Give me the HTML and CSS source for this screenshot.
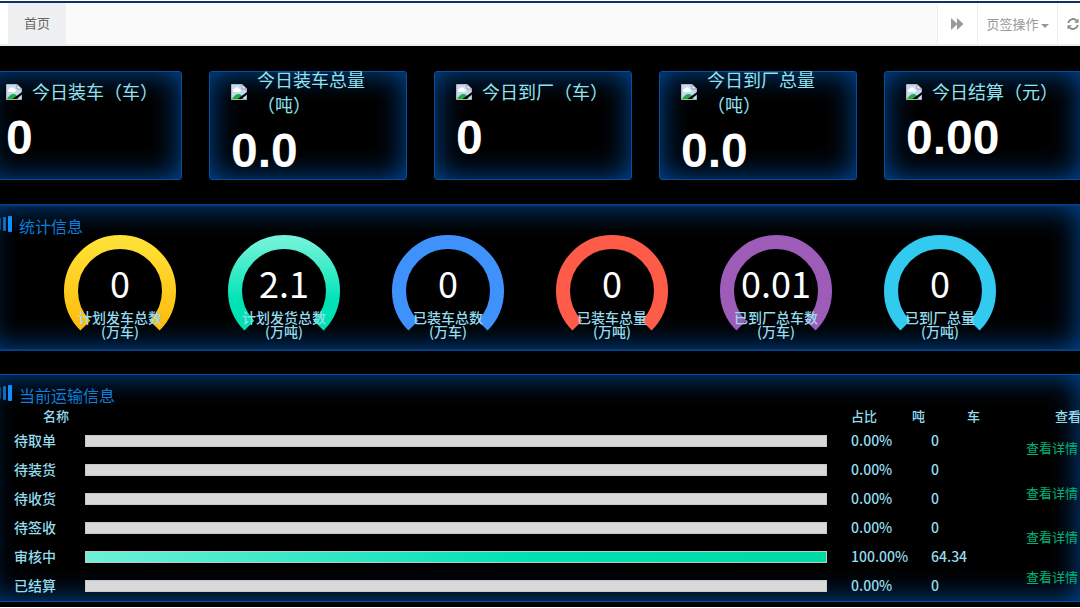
FILE: index.html
```html
<!DOCTYPE html>
<html lang="zh-CN">
<head>
    <meta charset="UTF-8">
    <meta name="viewport" content="width=device-width, initial-scale=1.0">
    <title>首页</title>
    <link rel="stylesheet" href="styles.css">
</head>
<body>
    <!-- Shared shapes -->
    <svg class="defs" width="0" height="0" aria-hidden="true">
        <defs>
            <linearGradient id="yellow" x1="0" y1="0" x2="0" y2="1">
                <stop offset="0" stop-color="#ffe135"/>
                <stop offset="1" stop-color="#ffbc0e"/>
            </linearGradient>
            <linearGradient id="teal" x1="0" y1="0" x2="0" y2="1">
                <stop offset="0" stop-color="#6ff3d8"/>
                <stop offset="0.7" stop-color="#00e4b6"/>
                <stop offset="1" stop-color="#00e0b0"/>
            </linearGradient>
            <symbol id="picture" viewBox="0 0 16 16">
                <path d="M0.500 0.500h10.500l4.500 4.500v10.500h-15z" fill="#c3d9f5" stroke="#b5b5b5"/>
                <path d="M2 6.500a2 2 0 0 1 2-2 2.500 2.500 0 0 1 4.500 0.500 1.500 1.500 0 0 1 0 3h-5a1.500 1.500 0 0 1-1.500-1.500z" fill="#fff"/>
                <path d="M1 15c1.500-3 4-5 6.500-5 2 0 4 1.500 5 5z" fill="#1fae3c"/>
                <path d="M11 0.500v4.500h4.500z" fill="#fff" stroke="#999"/>
                <path d="M16 8v2.500l-5.500 4.500h-4z" fill="#000"/>
            </symbol>
            <symbol id="bars" viewBox="0 0 16 20">
                <rect x="1" y="2" width="3" height="12" rx="1" fill="#0a4a86"/>
                <rect x="6" y="1" width="3" height="14" rx="1" fill="#0b6cc0"/>
                <rect x="11" y="0" width="4" height="16" rx="1" fill="#1090ff"/>
            </symbol>
        </defs>
    </svg>

    <nav class="tabs">
        <a class="tab" href="#">首页</a>
        <button class="tab-btn tab-next" aria-label="下一页">
            <svg width="13" height="12" viewBox="0 0 13 12"><path d="M0 0l6 5.500v-5.500l6.500 6-6.500 6v-5.500l-6 5.500z" fill="#999"/></svg>
        </button>
        <button class="tab-btn tab-menu">页签操作<span class="caret"></span></button>
        <button class="tab-btn tab-refresh" aria-label="刷新">
            <svg width="12" height="12" viewBox="0 0 12 12">
                <path d="M1.200 5a5 5 0 0 1 8.300-2.600M10.800 7a5 5 0 0 1-8.300 2.600" fill="none" stroke="#888" stroke-width="1.800"/>
                <path d="M11.500 0.500v4.300h-4.300zM0.500 11.500v-4.300h4.300z" fill="#888"/>
            </svg>
        </button>
    </nav>

    <main class="dashboard">
        <section class="cards">
            <div class="card">
                <div class="card-head"><svg class="card-icon"><use href="#picture"/></svg><span>今日装车（车）</span></div>
                <div class="card-value">0</div>
            </div>
            <div class="card">
                <div class="card-head"><svg class="card-icon"><use href="#picture"/></svg><span>今日装车总量（吨）</span></div>
                <div class="card-value">0.0</div>
            </div>
            <div class="card">
                <div class="card-head"><svg class="card-icon"><use href="#picture"/></svg><span>今日到厂（车）</span></div>
                <div class="card-value">0</div>
            </div>
            <div class="card">
                <div class="card-head"><svg class="card-icon"><use href="#picture"/></svg><span>今日到厂总量（吨）</span></div>
                <div class="card-value">0.0</div>
            </div>
            <div class="card">
                <div class="card-head"><svg class="card-icon"><use href="#picture"/></svg><span>今日结算（元）</span></div>
                <div class="card-value">0.00</div>
            </div>
        </section>

        <section class="panel stats">
            <h2 class="panel-title"><svg class="bars-icon"><use href="#bars"/></svg>统计信息</h2>
            <div class="gauges">
                <svg class="gauge" viewBox="0 0 112 108">
                    <path class="ring" stroke="url(#yellow)" d="M21.350 90.650A49 49 0 1 1 90.650 90.650"/>
                    <text class="gauge-value" x="56" y="63">0</text>
                    <text class="gauge-label" x="56" y="88">计划发车总数</text>
                    <text class="gauge-label" x="56" y="102">(万车)</text>
                </svg>
                <svg class="gauge" viewBox="0 0 112 108">
                    <path class="ring" stroke="url(#teal)" d="M21.350 90.650A49 49 0 1 1 90.650 90.650"/>
                    <text class="gauge-value" x="56" y="63">2.1</text>
                    <text class="gauge-label" x="56" y="88">计划发货总数</text>
                    <text class="gauge-label" x="56" y="102">(万吨)</text>
                </svg>
                <svg class="gauge" viewBox="0 0 112 108">
                    <path class="ring" stroke="#3f92fc" d="M21.350 90.650A49 49 0 1 1 90.650 90.650"/>
                    <text class="gauge-value" x="56" y="63">0</text>
                    <text class="gauge-label" x="56" y="88">已装车总数</text>
                    <text class="gauge-label" x="56" y="102">(万车)</text>
                </svg>
                <svg class="gauge" viewBox="0 0 112 108">
                    <path class="ring" stroke="#ff5b49" d="M21.350 90.650A49 49 0 1 1 90.650 90.650"/>
                    <text class="gauge-value" x="56" y="63">0</text>
                    <text class="gauge-label" x="56" y="88">已装车总量</text>
                    <text class="gauge-label" x="56" y="102">(万吨)</text>
                </svg>
                <svg class="gauge" viewBox="0 0 112 108">
                    <path class="ring" stroke="#9d5cb8" d="M21.350 90.650A49 49 0 1 1 90.650 90.650"/>
                    <text class="gauge-value" x="56" y="63">0.01</text>
                    <text class="gauge-label" x="56" y="88">已到厂总车数</text>
                    <text class="gauge-label" x="56" y="102">(万车)</text>
                </svg>
                <svg class="gauge" viewBox="0 0 112 108">
                    <path class="ring" stroke="#32caee" d="M21.350 90.650A49 49 0 1 1 90.650 90.650"/>
                    <text class="gauge-value" x="56" y="63">0</text>
                    <text class="gauge-label" x="56" y="88">已到厂总量</text>
                    <text class="gauge-label" x="56" y="102">(万吨)</text>
                </svg>
            </div>
        </section>

        <section class="panel transport">
            <h2 class="panel-title"><svg class="bars-icon"><use href="#bars"/></svg>当前运输信息</h2>
            <table class="transport-table">
                <colgroup>
                    <col class="col-name">
                    <col>
                    <col class="col-rate">
                    <col class="col-ton">
                    <col class="col-car">
                    <col class="col-view">
                </colgroup>
                <thead>
                    <tr><th class="indent">名称</th><th></th><th>占比</th><th>吨</th><th>车</th><th class="indent">查看</th></tr>
                </thead>
                <tbody>
                    <tr>
                        <td>待取单</td>
                        <td><div class="bar"></div></td>
                        <td>0.00%</td><td class="ton">0</td><td></td>
                        <td rowspan="6" class="links-cell">
                            <div class="links">
                                <a href="#">查看详情</a>
                                <a href="#">查看详情</a>
                                <a href="#">查看详情</a>
                                <a href="#">查看详情</a>
                            </div>
                        </td>
                    </tr>
                    <tr><td>待装货</td><td><div class="bar"></div></td><td>0.00%</td><td class="ton">0</td><td></td></tr>
                    <tr><td>待收货</td><td><div class="bar"></div></td><td>0.00%</td><td class="ton">0</td><td></td></tr>
                    <tr><td>待签收</td><td><div class="bar"></div></td><td>0.00%</td><td class="ton">0</td><td></td></tr>
                    <tr><td>审核中</td><td><div class="bar"><div class="bar-fill" style="width: 100%"></div></div></td><td>100.00%</td><td class="ton">64.34</td><td></td></tr>
                    <tr><td>已结算</td><td><div class="bar"></div></td><td>0.00%</td><td class="ton">0</td><td></td></tr>
                </tbody>
            </table>
        </section>
    </main>
</body>
</html>
```
FILE: styles.css
```css
* {
    box-sizing: border-box;
    margin: 0;
    padding: 0;
}

body {
    background-color: #fff;
    font-family: "Noto Sans CJK SC", sans-serif;
    font-size: 14px;
    overflow: hidden;
}

.defs {
    position: absolute;
}

/* Tab bar */
.tabs {
    display: flex;
    height: 45px;
    margin-top: 1px;
    padding-left: 8px;
    border-top: 2px solid #14305f;
    border-bottom: 2px solid #e9eef0;
    background: linear-gradient(to right, #fff 8px, #fafafa 8px);
}

.tab,
.tab-btn {
    font-family: inherit;
    font-size: 13px;
    line-height: 40px;
}

.tab {
    width: 58px;
    margin-right: auto;
    background-color: #eff0f1;
    color: #666;
    text-align: center;
    text-decoration: none;
}

.tab-btn {
    display: flex;
    align-items: center;
    justify-content: center;
    border: none;
    border-left: 1px solid #eee;
    background-color: #fff;
    color: #999;
    cursor: pointer;
}

.tab-next {
    width: 40px;
}

.tab-menu {
    width: 80px;
}

.tab-refresh {
    width: 30px;
    margin-right: -7px;
}

.caret {
    margin: 4px 0 0 2px;
    border-top: 4px solid #999;
    border-left: 4px solid transparent;
    border-right: 4px solid transparent;
}

/* Dashboard runs past both window edges */
.dashboard {
    overflow: hidden;
    padding: 25px 0 5px;
    background-color: #000;
}

.cards,
.panel {
    margin-left: -16px;
    margin-right: -2px;
}

.cards {
    display: grid;
    grid-template-columns: repeat(5, 1fr);
    gap: 27px;
}

.card {
    display: flex;
    flex-direction: column;
    justify-content: center;
    height: 109px;
    padding-left: 21px;
    border: 1px solid #04509f;
    border-radius: 3px;
    box-shadow: inset 0 0 30px #004c9e;
}

.card-head {
    display: flex;
    align-items: center;
    gap: 10px;
    color: #8fe3f2;
    font-size: 18px;
    line-height: 25px;
}

.card-icon {
    flex: none;
    width: 16px;
    height: 16px;
}

.card-value {
    color: #fff;
    font-family: "Liberation Sans", Arial, sans-serif;
    font-size: 48px;
    font-weight: bold;
    line-height: 68px;
}

/* Panels */
.panel {
    box-shadow: inset 0 0 30px #004c9e;
}

.stats {
    margin-top: 24px;
    padding-top: 9px;
    border: 2px solid #033f80;
}

.transport {
    margin-top: 23px;
    padding: 9px 0 1px;
    border: 1px solid #04509f;
}

.panel-title {
    display: flex;
    align-items: center;
    gap: 6px;
    padding-left: 12px;
    color: #0a7fdc;
    font-size: 16px;
    font-weight: normal;
    line-height: 22px;
}

.stats .panel-title {
    padding-left: 11px;
}

.bars-icon {
    width: 16px;
    height: 20px;
}

.gauges {
    display: grid;
    grid-template-columns: repeat(6, 1fr);
    justify-items: center;
    margin-top: -2px;
    padding: 0 58px 6px 52px;
}

.gauge {
    width: 112px;
    height: 108px;
}

.ring {
    fill: none;
    stroke-width: 14;
}

.gauge-value {
    fill: #fff;
    font-size: 36px;
    text-anchor: middle;
}

.gauge-label {
    fill: #95dcee;
    font-size: 14px;
    font-weight: 500;
    text-anchor: middle;
}

/* Transport table */
.transport-table {
    width: 100%;
    padding-left: 29px;
    table-layout: fixed;
    border-spacing: 0;
    color: #95dcee;
    font-weight: 500;
    white-space: nowrap;
}

.col-name {
    width: 71px;
}

.col-rate {
    width: 61px;
}

.col-ton {
    width: 55px;
}

.col-car {
    width: 59px;
}

.col-view {
    width: 55px;
}

.transport-table th {
    height: 20px;
    font-size: 13px;
    font-weight: 500;
    line-height: 20px;
    text-align: left;
}

.transport-table .indent {
    padding-left: 29px;
}

.transport-table td {
    height: 29px;
    line-height: 29px;
}

.transport-table .ton {
    padding-left: 19px;
}

.bar {
    height: 12px;
    margin-right: 24px;
    border: 1px solid #c8c8c8;
    background-color: #d9d9d9;
}

.bar-fill {
    height: 100%;
    background: linear-gradient(to right, #6df0d8, #00e0b4 60%, #00d9a4);
}

.transport-table .links-cell {
    vertical-align: top;
}

.links {
    display: grid;
    grid-template-rows: 42px 48px 40px 40px;
    align-items: center;
}

.links a {
    color: #00b478;
    font-size: 13px;
    font-weight: normal;
    text-decoration: none;
}
```
